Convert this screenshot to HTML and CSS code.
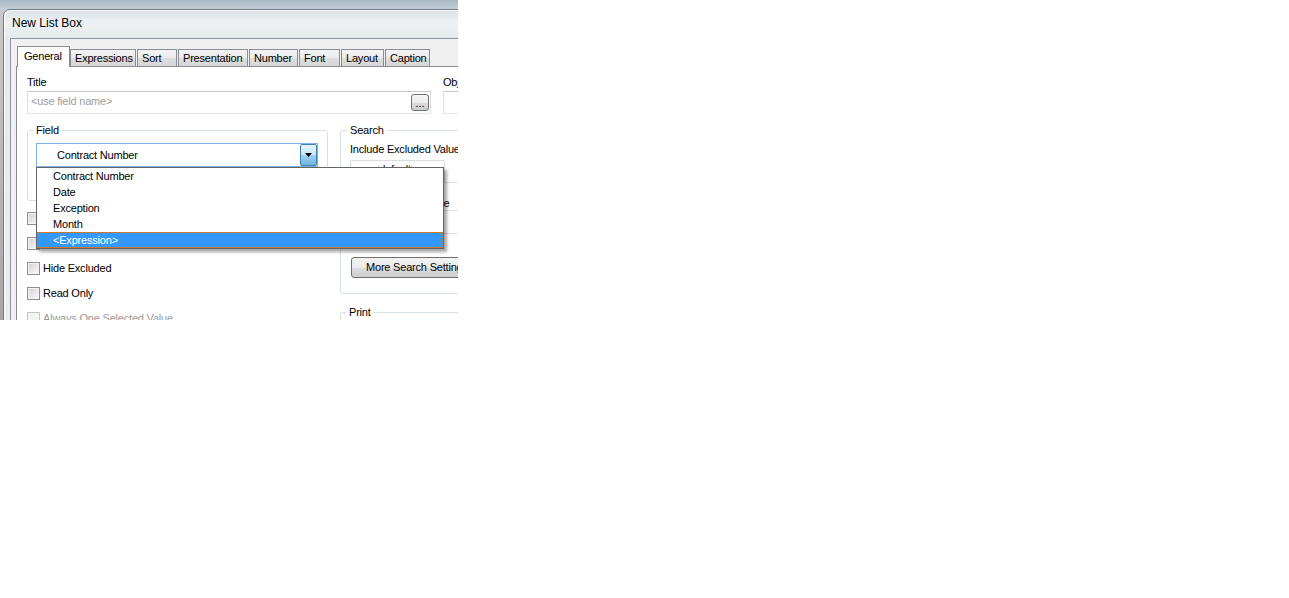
FILE: index.html
```html
<!DOCTYPE html>
<html lang="en">
<head>
<meta charset="utf-8">
<title>New List Box</title>
<link rel="stylesheet" href="styles.css">
</head>
<body>
<div class="screen">
  <div class="window">
    <div class="titlebar">New List Box</div>
    <div class="client">
      <div class="tabs">
        <div class="tab active w-general">General</div>
        <div class="tab w-expr">Expressions</div>
        <div class="tab w-sort">Sort</div>
        <div class="tab w-pres">Presentation</div>
        <div class="tab w-num">Number</div>
        <div class="tab w-font">Font</div>
        <div class="tab w-layout">Layout</div>
        <div class="tab w-caption">Caption</div>
      </div>
      <div class="panel">
        <div class="row-title">
          <div class="title-col">
            <div class="label">Title</div>
            <div class="textbox">
              <span class="placeholder">&lt;use field name&gt;</span>
              <span class="dots">...</span>
            </div>
          </div>
          <div class="object-col">
            <div class="label">Object ID</div>
            <div class="textbox"></div>
          </div>
        </div>

        <div class="row-main">
          <div class="col-left">
            <fieldset class="group group-field">
              <legend>Field</legend>
              <div class="combo focused">
                <span class="combo-text">Contract Number</span>
                <span class="drop-btn">
                  <svg width="7" height="4" viewBox="0 0 7 4"><path d="M0 0H7L3.5 4Z" fill="#000"/></svg>
                </span>
                <ul class="droplist">
                  <li>Contract Number</li>
                  <li>Date</li>
                  <li>Exception</li>
                  <li>Month</li>
                  <li class="selected">&lt;Expression&gt;</li>
                </ul>
              </div>
            </fieldset>
            <div class="checks">
              <div class="check"><span class="box"></span>Show Frequency</div>
              <div class="check"><span class="box"></span>In Percent</div>
              <div class="check"><span class="box"></span>Hide Excluded</div>
              <div class="check"><span class="box"></span>Read Only</div>
              <div class="check disabled"><span class="box"></span>Always One Selected Value</div>
            </div>
          </div>

          <div class="col-right">
            <fieldset class="group group-search">
              <legend>Search</legend>
              <div class="search-label">Include Excluded Values</div>
              <div class="combo small"><span class="combo-text">&lt;default&gt;</span></div>
              <div class="mode-row">Default Search Mode</div>
              <div class="combo plain"><span class="combo-text">&lt;use default&gt;</span></div>
              <div class="button">More Search Settings</div>
            </fieldset>
            <fieldset class="group group-print">
              <legend>Print</legend>
            </fieldset>
          </div>
        </div>
      </div>
    </div>
  </div>
</div>
</body>
</html>
```

FILE: styles.css
```css
html, body {
  margin: 0;
  padding: 0;
  background: #ffffff;
}

body {
  font-family: "Liberation Sans", Arial, sans-serif;
  font-size: 11px;
  letter-spacing: -0.2px;
  color: #000;
}

/* desktop area behind the dialog */
.screen {
  position: relative;
  width: 458px;
  height: 320px;
  overflow: hidden;
  background: linear-gradient(180deg, #a8b7c3 0, #c2cdd6 9px, #c9c9c9 11px, #a7a7a7 100%);
}

/* dialog window frame */
.window {
  position: absolute;
  left: 3px;
  top: 9px;
  width: 700px;
  height: 500px;
  box-sizing: border-box;
  padding-left: 6px;
  border: 1px solid #6f7c88;
  border-radius: 7px 7px 0 0;
  background: linear-gradient(180deg, #d9e0e6 0, #eef2f5 12px, #e4e9ed 28px, #eef1f4 100%);
  box-shadow: inset 1px 1px 0 #fbfcfd;
}

.titlebar {
  height: 28px;
  line-height: 27px;
  padding-left: 2px;
  font-size: 12px;
  letter-spacing: 0;
  color: #000;
}

.client {
  height: 460px;
  box-sizing: border-box;
  padding: 7px 0 0 5px;
  border: 1px solid #8e98a2;
  background: #f0f0f0;
}

/* tab strip */
.tabs {
  display: flex;
  align-items: flex-end;
  gap: 1px;
  height: 20px;
  padding-left: 1px;
}

.tab {
  box-sizing: border-box;
  height: 17px;
  padding: 1px 0 0 4px;
  line-height: 15px;
  border: 1px solid #898c95;
  border-bottom: 0;
  background: linear-gradient(180deg, #f4f4f4 0%, #ebebeb 50%, #dedede 51%, #d6d6d6 100%);
  white-space: nowrap;
  overflow: hidden;
}

.tab.active {
  position: relative;
  z-index: 1;
  height: 21px;
  margin-bottom: -1px;
  margin-right: -1px;
  padding: 2px 0 0 6px;
  background: #ffffff;
}

.w-general { width: 53px; }
.w-expr { width: 66px; }
.w-sort { width: 40px; }
.w-pres { width: 70px; }
.w-num { width: 49px; }
.w-font { width: 41px; }
.w-layout { width: 43px; }
.w-caption { width: 45px; }

/* tab page */
.panel {
  height: 400px;
  box-sizing: border-box;
  padding: 9px 0 0 10px;
  border: 1px solid #898c95;
  background: #ffffff;
}

.label {
  line-height: 13px;
  margin-bottom: 2px;
  white-space: nowrap;
}

.row-title {
  display: flex;
  gap: 12px;
}

.title-col { width: 404px; }
.object-col { width: 140px; }

.textbox {
  display: flex;
  align-items: center;
  justify-content: space-between;
  box-sizing: border-box;
  height: 23px;
  border: 1px solid;
  border-color: #c3c7cd #dbdfe6 #e3e9ef #dbdfe6;
  background: #fff;
}

.placeholder {
  padding: 0 0 3px 3px;
  color: #9d9d9d;
}

.dots {
  box-sizing: border-box;
  width: 18px;
  height: 17px;
  margin-right: 1px;
  border: 1px solid #707070;
  border-radius: 3px;
  background: linear-gradient(180deg, #f6f6f6 0%, #ebebeb 50%, #dcdcdc 51%, #cfcfcf 100%);
  text-align: center;
  line-height: 17px;
  font-size: 11px;
  letter-spacing: 0;
}

/* field / search area */
.row-main {
  display: flex;
  gap: 12px;
  margin-top: 10px;
}

.col-left { width: 301px; }
.col-right { width: 200px; }

.group {
  margin: 0;
  min-width: 0;
  border: 1px solid #d5dfe5;
  border-radius: 3px;
}

.group legend {
  padding: 0 3px;
  margin-left: -3px;
  line-height: 13px;
}

.group-field {
  padding: 6px 9px 33px 8px;
}

.combo {
  position: relative;
  display: flex;
  align-items: stretch;
  box-sizing: border-box;
  height: 24px;
  border: 1px solid #abadb3;
  background: #fff;
}

.combo.focused {
  z-index: 10;
  border-color: #7eb4ea;
}

.combo-text {
  flex: 1;
  padding-left: 20px;
  line-height: 22px;
  white-space: nowrap;
  overflow: hidden;
}

.drop-btn {
  display: flex;
  align-items: center;
  justify-content: center;
  box-sizing: border-box;
  width: 17px;
  border: 1px solid #3c7fb1;
  border-radius: 2px;
  background: linear-gradient(180deg, #e8f5fc 0%, #c9e7f7 48%, #9fd3ef 52%, #6fb5dd 100%);
}

.drop-btn svg { display: block; }

/* open drop-down list of the field combo */
.droplist {
  position: absolute;
  top: calc(100% + 1px);
  left: -1px;
  width: 408px;
  margin: 0;
  padding: 0;
  list-style: none;
  box-sizing: border-box;
  border: 1px solid #646464;
  background: #fff;
  box-shadow: 3px 3px 3px rgba(0, 0, 0, 0.35);
}

.droplist li {
  box-sizing: border-box;
  height: 16px;
  line-height: 14px;
  padding-left: 15px;
  border: 1px dotted transparent;
  white-space: nowrap;
}

.droplist li.selected {
  background: #3399ff;
  color: #fff;
  border-color: #d27b2c;
}

/* check boxes */
.checks {
  padding-top: 11px;
}

.check {
  display: flex;
  align-items: center;
  gap: 3px;
  height: 13px;
  margin-bottom: 12px;
  line-height: 13px;
  white-space: nowrap;
}

.box {
  box-sizing: border-box;
  width: 13px;
  height: 13px;
  border: 1px solid #8e8f8f;
  background: linear-gradient(135deg, #cdd0d4 0%, #e6e7e9 50%, #f8f8f8 100%);
  box-shadow: inset 0 0 0 1px #f4f4f4;
}

.check.disabled { color: #9b9b9b; }
.check.disabled .box {
  border-color: #c6c6c6;
  background: #f4f4f4;
}

/* search group */
.group-search {
  padding: 6px 0 15px 9px;
}

.search-label {
  line-height: 13px;
  margin-bottom: 4px;
  white-space: nowrap;
}

.combo.small {
  width: 95px;
  height: 23px;
  border-color: #d9dce0;
  border-radius: 2px;
}

.combo.small .combo-text {
  padding-left: 22px;
  line-height: 17px;
}

.mode-row {
  box-sizing: border-box;
  height: 29px;
  margin-top: -1px;
  padding-top: 14px;
  line-height: 13px;
  border-top: 1px solid #dcdfe3;
  border-bottom: 1px solid #dcdfe3;
  white-space: nowrap;
}

.combo.plain {
  height: 23px;
  border-color: #dcdfe3;
  border-top: 0;
}

.button {
  box-sizing: border-box;
  width: 130px;
  height: 21px;
  margin: 23px 0 0 1px;
  padding-left: 14px;
  line-height: 19px;
  border: 1px solid #707070;
  border-radius: 3px;
  background: linear-gradient(180deg, #f2f2f2 0%, #ebebeb 50%, #dddddd 51%, #cfcfcf 100%);
  white-space: nowrap;
}

.group-print {
  margin-top: 12px;
  height: 60px;
  padding: 0 0 0 8px;
}
```
